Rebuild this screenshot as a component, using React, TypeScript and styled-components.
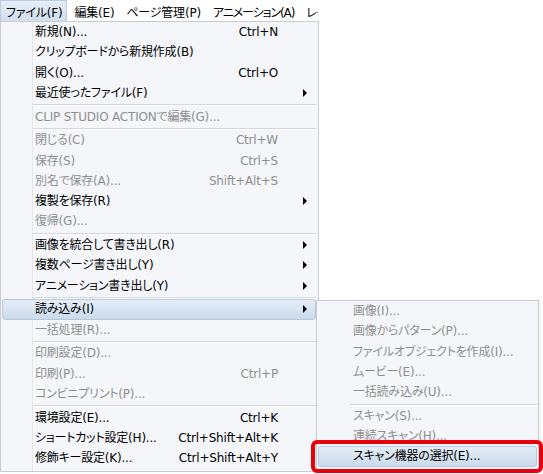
import React from "react";
import styled, { createGlobalStyle, css } from "styled-components";

const Global = createGlobalStyle`
  html, body { margin: 0; padding: 0; background: #ffffff; overflow: hidden; }
  #root { width: 543px; height: 474px; }
`;

const FONT = `"DejaVu Sans", "Noto Sans CJK JP", sans-serif`;

const Page = styled.div`
  position: relative;
  width: 543px;
  height: 474px;
  overflow: hidden;
  font-family: ${FONT};
  font-size: 12px;
  letter-spacing: -0.2px;
  font-feature-settings: "palt";
  color: #000;
  display: flex;
  flex-direction: column;
`;

const MenuBar = styled.div`
  display: flex;
  width: 318px;
  height: 21px;
  overflow: hidden;
  align-items: stretch;
  background: #fff;
`;

const BarItem = styled.div<{ $active?: boolean; $tight?: boolean }>`
  display: flex;
  align-items: center;
  padding: 0 4px 0 5px;
  margin-right: 1px;
  white-space: nowrap;
  border: 1px solid transparent;
  border-bottom: none;
  letter-spacing: ${(p) => (p.$tight ? "-1.1px" : "-0.2px")};
  ${(p) =>
    p.$active &&
    css`
      background: linear-gradient(#e6eef7, #cfdeee);
      border-color: #b9cde0;
    `}
`;

const highlight = css`
  background: linear-gradient(#e4edf7, #cbdbec);
  border: 1px solid #b5c8dc;
  border-radius: 3px;
`;

const Panel = styled.div`
  width: 319px;
  box-sizing: border-box;
  border: 1px solid #c8cdd3;
  padding: 0 2px 3px 1px;
  background:
    linear-gradient(to right, transparent 31px, #e1e4e8 31px, #e1e4e8 32px, #ffffff 32px, #ffffff 33px, transparent 33px),
    #f4f6fa;
  display: flex;
  flex-direction: column;
`;

const SubPanel = styled.div`
  position: absolute;
  left: 316px;
  top: 300px;
  width: 223px;
  box-sizing: border-box;
  border: 1px solid #c8cdd3;
  padding: 0 1px 4px 1px;
  background: #f4f6fa;
  display: flex;
  flex-direction: column;
  box-shadow: 1px 1px 2px rgba(0, 0, 0, 0.08);
`;

const Row = styled.div<{ $disabled?: boolean; $active?: boolean; $indent: number }>`
  height: 20.25px;
  box-sizing: border-box;
  display: grid;
  grid-template-columns: 1fr auto 37px;
  align-items: center;
  padding-left: ${(p) => p.$indent}px;
  border: 1px solid transparent;
  white-space: nowrap;
  color: ${(p) => (p.$disabled ? "#8f8f8f" : "#000")};
  ${(p) => p.$active && highlight}
`;

const Label = styled.span`
  line-height: 1;
`;

const Shortcut = styled.span`
  text-align: right;
  line-height: 1;
`;

const ArrowCell = styled.span`
  display: flex;
  justify-content: flex-start;
  padding-left: 25px;
`;

const Arrow = styled.span`
  width: 0;
  height: 0;
  border-top: 4px solid transparent;
  border-bottom: 4px solid transparent;
  border-left: 4px solid #000;
`;

const Separator = styled.div<{ $indent: number }>`
  height: 3.5px;
  display: flex;
  align-items: center;
  padding-left: ${(p) => p.$indent}px;
  &::after {
    content: "";
    flex: 1;
    height: 1px;
    background: #d3d7dc;
    box-shadow: 0 1px 0 #ffffff;
  }
`;

const RedBox = styled.div`
  position: absolute;
  left: 311px;
  top: 440px;
  width: 232px;
  height: 33px;
  box-sizing: border-box;
  border: 4px solid #e8000b;
  border-radius: 6px;
  pointer-events: none;
`;

type Item =
  | { sep: true }
  | { sep?: false; label: string; sc?: string; sub?: boolean; disabled?: boolean; active?: boolean };

const mainItems: Item[] = [
  { label: "新規(N)...", sc: "Ctrl+N" },
  { label: "クリップボードから新規作成(B)" },
  { label: "開く(O)...", sc: "Ctrl+O" },
  { label: "最近使ったファイル(F)", sub: true },
  { sep: true },
  { label: "CLIP STUDIO ACTIONで編集(G)...", disabled: true },
  { sep: true },
  { label: "閉じる(C)", sc: "Ctrl+W", disabled: true },
  { label: "保存(S)", sc: "Ctrl+S", disabled: true },
  { label: "別名で保存(A)...", sc: "Shift+Alt+S", disabled: true },
  { label: "複製を保存(R)", sub: true },
  { label: "復帰(G)...", disabled: true },
  { sep: true },
  { label: "画像を統合して書き出し(R)", sub: true },
  { label: "複数ページ書き出し(Y)", sub: true },
  { label: "アニメーション書き出し(Y)", sub: true },
  { sep: true },
  { label: "読み込み(I)", sub: true, active: true },
  { label: "一括処理(R)...", disabled: true },
  { sep: true },
  { label: "印刷設定(D)...", disabled: true },
  { label: "印刷(P)...", sc: "Ctrl+P", disabled: true },
  { label: "コンビニプリント(P)...", disabled: true },
  { sep: true },
  { label: "環境設定(E)...", sc: "Ctrl+K" },
  { label: "ショートカット設定(H)...", sc: "Ctrl+Shift+Alt+K" },
  { label: "修飾キー設定(K)...", sc: "Ctrl+Shift+Alt+Y" },
];

const subItems: Item[] = [
  { label: "画像(I)...", disabled: true },
  { label: "画像からパターン(P)...", disabled: true },
  { label: "ファイルオブジェクトを作成(I)...", disabled: true },
  { label: "ムービー(E)...", disabled: true },
  { label: "一括読み込み(U)...", disabled: true },
  { sep: true },
  { label: "スキャン(S)...", disabled: true },
  { label: "連続スキャン(H)...", disabled: true },
  { label: "スキャン機器の選択(E)...", active: true },
];

function MenuList({ items, indent, sepIndent }: { items: Item[]; indent: number; sepIndent: number }) {
  return (
    <>
      {items.map((it, i) =>
        it.sep ? (
          <Separator key={i} $indent={sepIndent} />
        ) : (
          <Row key={i} $indent={indent} $disabled={it.disabled} $active={it.active}>
            <Label>{it.label}</Label>
            <Shortcut>{it.sc ?? ""}</Shortcut>
            <ArrowCell>{it.sub ? <Arrow /> : null}</ArrowCell>
          </Row>
        )
      )}
    </>
  );
}

export default function App() {
  return (
    <Page>
      <Global />
      <MenuBar>
        <BarItem $active>ファイル(F)</BarItem>
        <BarItem>編集(E)</BarItem>
        <BarItem>ページ管理(P)</BarItem>
        <BarItem $tight>アニメーション(A)</BarItem>
        <BarItem>レイヤー(L)</BarItem>
      </MenuBar>
      <Panel>
        <MenuList items={mainItems} indent={32} sepIndent={31} />
      </Panel>
      <SubPanel>
        <MenuList items={subItems} indent={34} sepIndent={32} />
      </SubPanel>
      <RedBox />
    </Page>
  );
}
